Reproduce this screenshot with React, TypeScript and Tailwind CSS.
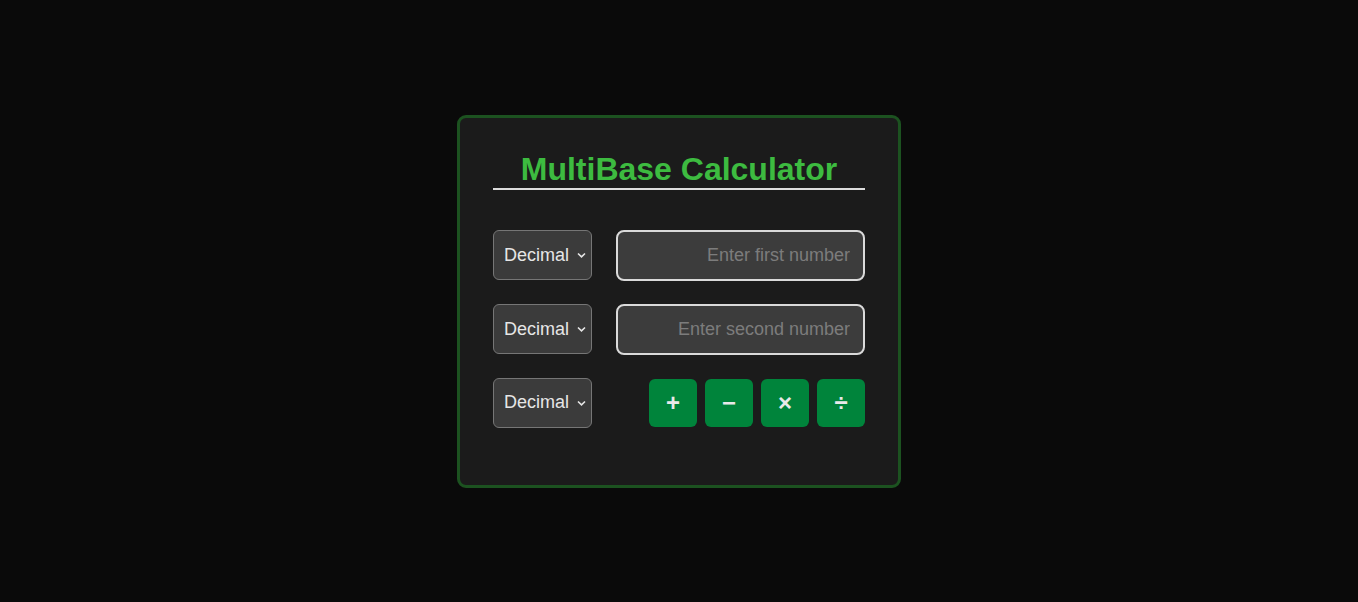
import { useState } from "react"

const bases = ["Decimal", "Binary", "Octal", "Hexadecimal"]

function BaseSelect() {
  const [value, setValue] = useState("Decimal")
  return (
    <div className="relative w-[99px] h-[50px]">
      <select
        value={value}
        onChange={(e) => setValue(e.target.value)}
        className="
          appearance-none
          w-full
          h-full
          rounded-[6px]
          border
          border-[#767676]
          bg-[#3b3b3b]
          pl-[10px]
          pr-5
          text-[18px]
          text-[#e6e6e6]
          outline-none
        "
      >
        {bases.map((b) => (
          <option key={b} value={b}>
            {b}
          </option>
        ))}
      </select>
      <svg
        className="absolute right-[6px] top-1/2 -translate-y-1/2 pointer-events-none"
        width="9"
        height="6"
        viewBox="0 0 9 6"
        fill="none"
      >
        <path d="M1 1.5 L4.5 4.8 L8 1.5" stroke="#e6e6e6" strokeWidth="1.6" />
      </svg>
    </div>
  )
}

function NumberInput({ placeholder }: { placeholder: string }) {
  return (
    <input
      type="text"
      placeholder={placeholder}
      className="
        w-[249px]
        h-[51px]
        rounded-[8px]
        border-2
        border-[#dadada]
        bg-[#3c3c3c]
        px-[13px]
        text-right
        text-[18px]
        text-[#e6e6e6]
        placeholder:text-[#7c7c7c]
        outline-none
      "
    />
  )
}

const ops = ["+", "−", "×", "÷"]

export default function App() {
  return (
    <div
      className="min-h-[602px] w-full bg-[#0a0a0a] flex items-center justify-center"
      style={{ fontFamily: '"Liberation Sans", Arial, sans-serif' }}
    >
      {/* Card */}
      <div
        className="
          w-[444px]
          rounded-[9px]
          border-[3px]
          border-[#1c5220]
          bg-[#1b1b1b]
          px-[33px]
          pt-[33px]
          pb-[33px]
        "
      >
        <h1 className="text-[32px] leading-[37px] font-bold text-[#3dbb40] text-center border-b-2 border-[#dcdcdc]">
          MultiBase Calculator
        </h1>

        <div className="mt-[40px] flex flex-col">
          <div className="flex items-center justify-between mb-[23px]">
            <BaseSelect />
            <NumberInput placeholder="Enter first number" />
          </div>

          <div className="flex items-center justify-between mb-[23px]">
            <BaseSelect />
            <NumberInput placeholder="Enter second number" />
          </div>

          <div className="flex items-center justify-between mb-[24px]">
            <BaseSelect />
            <div className="flex gap-2">
              {ops.map((op) => (
                <button
                  key={op}
                  className="
                    w-12
                    h-12
                    rounded-[6px]
                    bg-[#00843b]
                    text-[24px]
                    font-bold
                    text-[#e9e9e9]
                    flex
                    items-center
                    justify-center
                  "
                >
                  {op}
                </button>
              ))}
            </div>
          </div>
        </div>
      </div>
    </div>
  )
}
